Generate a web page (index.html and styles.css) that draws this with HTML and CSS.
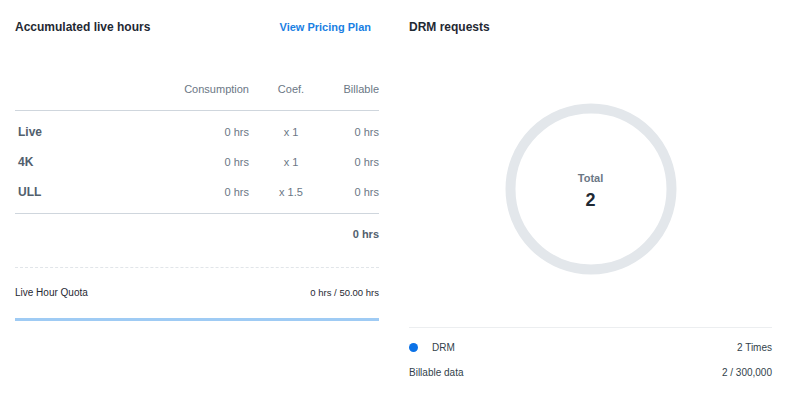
FILE: index.html
```html
<!DOCTYPE html>
<html lang="en">

<head>
    <meta charset="UTF-8">
    <title>Usage</title>
    <link rel="stylesheet" href="styles.css">
</head>

<body>

    <div class="panels">
        <section class="panel">
            <div class="panel-head">
                <h2>Accumulated live hours</h2>
                <a class="link" href="#">View Pricing Plan</a>
            </div>

            <div class="hours-table">
                <div class="row head">
                    <span></span>
                    <span class="num">Consumption</span>
                    <span class="mid">Coef.</span>
                    <span class="num">Billable</span>
                </div>
                <div class="rows">
                    <div class="row">
                        <span class="label">Live</span>
                        <span class="num">0 hrs</span>
                        <span class="mid">x 1</span>
                        <span class="num">0 hrs</span>
                    </div>
                    <div class="row">
                        <span class="label">4K</span>
                        <span class="num">0 hrs</span>
                        <span class="mid">x 1</span>
                        <span class="num">0 hrs</span>
                    </div>
                    <div class="row">
                        <span class="label">ULL</span>
                        <span class="num">0 hrs</span>
                        <span class="mid">x 1.5</span>
                        <span class="num">0 hrs</span>
                    </div>
                </div>
                <div class="total">0 hrs</div>
            </div>

            <div class="quota">
                <span>Live Hour Quota</span>
                <span>0 hrs / 50.00 hrs</span>
            </div>
            <div class="quota-bar"></div>
        </section>

        <section class="panel">
            <div class="panel-head">
                <h2>DRM requests</h2>
            </div>

            <div class="chart">
                <svg width="172" height="172" viewBox="0 0 172 172">
                    <circle cx="86" cy="86" r="80.5" fill="none" stroke="#e3e7eb" stroke-width="10" />
                </svg>
                <div class="chart-center">
                    <div class="chart-label">Total</div>
                    <div class="chart-value">2</div>
                </div>
            </div>

            <div class="legend">
                <div class="legend-row">
                    <span class="dot"></span>
                    <span class="legend-name">DRM</span>
                    <span class="legend-value">2 Times</span>
                </div>
                <div class="legend-row">
                    <span class="legend-name plain">Billable data</span>
                    <span class="legend-value">2 / 300,000</span>
                </div>
            </div>
        </section>
    </div>

</body>

</html>
```

FILE: styles.css
```css
body {
    margin: 0;
    background: white;
    font-family: 'Liberation Sans', Arial, sans-serif;
    color: #1f2933;
}

.panels {
    display: grid;
    grid-template-columns: 364px 363px;
    column-gap: 30px;
    padding: 19px 13px 0 15px;
}

.panel-head {
    display: flex;
    justify-content: space-between;
    align-items: center;
    height: 16px;
}

h2 {
    margin: 0;
    font-size: 12px;
    font-weight: bold;
    color: #1f2933;
}

.link {
    font-size: 11px;
    font-weight: bold;
    color: #1a7fe3;
    text-decoration: none;
    margin-right: 8px;
}

.hours-table {
    margin-top: 47px;
}

.row {
    display: grid;
    grid-template-columns: 134px 100px 84px 46px;
    align-items: center;
    height: 30px;
    font-size: 11px;
    color: #6b7785;
}

.row.head {
    height: 14px;
    padding-bottom: 14px;
    border-bottom: 1px solid #cfd6dd;
}

.num {
    text-align: right;
}

.mid {
    text-align: center;
}

.label {
    padding-left: 3px;
    font-size: 12px;
    font-weight: bold;
    color: #52606d;
}

.rows {
    padding: 6px 0 6px;
    border-bottom: 1px solid #cfd6dd;
}

.total {
    text-align: right;
    font-size: 11px;
    font-weight: bold;
    color: #52606d;
    line-height: 14px;
    padding: 13px 0 26px;
    border-bottom: 1px dashed #e1e5e9;
}

.quota {
    display: flex;
    justify-content: space-between;
    font-size: 10px;
    line-height: 14px;
    color: #1f2933;
    padding-top: 18px;
}

.quota span:last-child {
    font-size: 9.5px;
}

.quota-bar {
    margin-top: 18px;
    height: 3px;
    background: #9fcbf4;
}

.chart {
    position: relative;
    display: flex;
    justify-content: center;
    margin-top: 68px;
    height: 172px;
}

.chart-center {
    position: absolute;
    top: 0;
    left: 0;
    right: 0;
    bottom: 0;
    padding-top: 4px;
    display: flex;
    flex-direction: column;
    align-items: center;
    justify-content: center;
}

.chart-label {
    font-size: 11px;
    font-weight: bold;
    color: #6b7785;
}

.chart-value {
    margin-top: 6px;
    font-size: 18px;
    font-weight: bold;
    color: #1f2933;
}

.legend {
    margin-top: 52px;
    border-top: 1px solid #eceef0;
    padding-top: 12px;
}

.legend-row {
    display: flex;
    align-items: center;
    height: 14px;
    margin-bottom: 11px;
    font-size: 10px;
    color: #1f2933;
}

.dot {
    width: 9px;
    height: 9px;
    border-radius: 50%;
    background: #0b72e7;
    margin-right: 14px;
}

.legend-name {
    flex: 1;
    color: #323f4b;
}

.legend-value {
    text-align: right;
    color: #323f4b;
}
```
